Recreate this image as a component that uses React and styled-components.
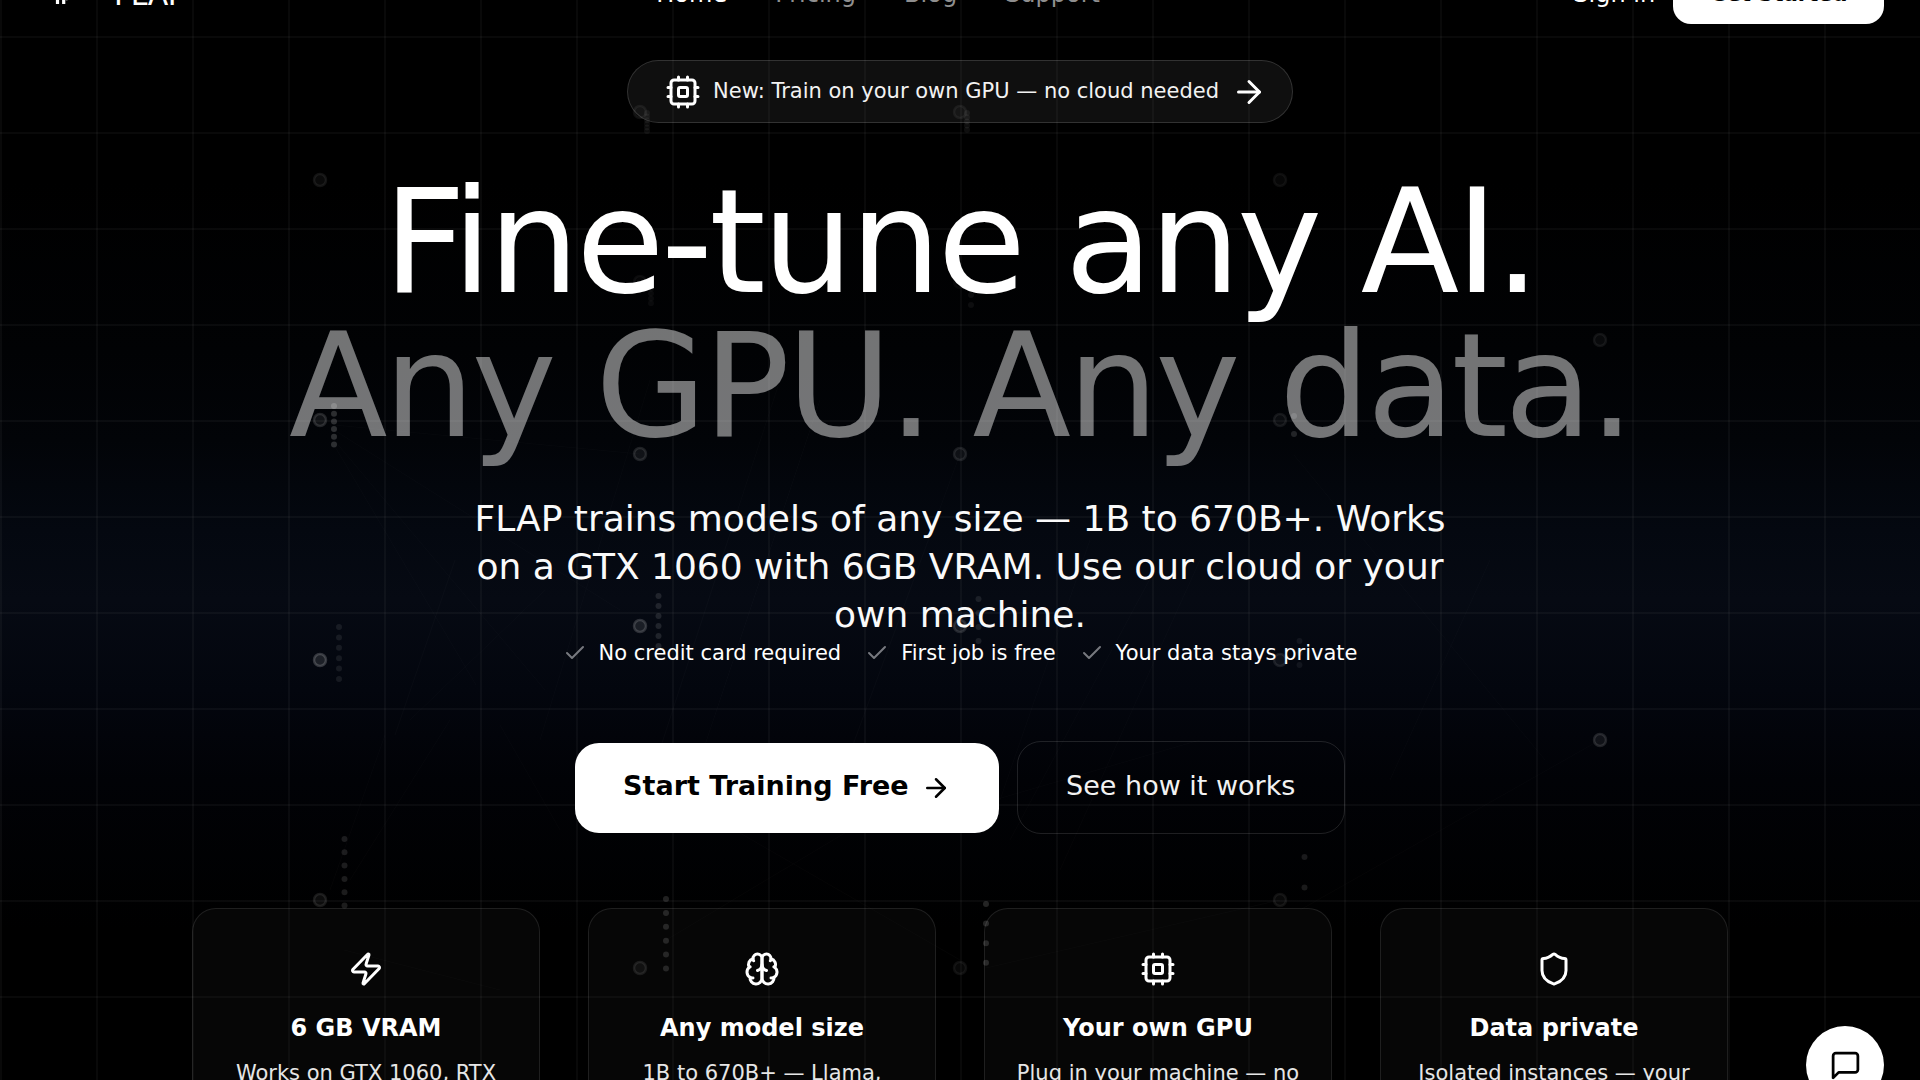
import React from 'react'
import styled, { createGlobalStyle } from 'styled-components'
import { ArrowRight, Check, Shield, Zap } from 'lucide-react'

const rings = [
  [320, 180, 0.1], [640, 112, 0.08], [960, 112, 0.08], [1280, 180, 0.07],
  [640, 282, 0.06], [960, 282, 0.04], [1600, 340, 0.09],
  [320, 420, 0.17], [1280, 420, 0.1], [640, 454, 0.15], [960, 454, 0.13],
  [640, 626, 0.22], [960, 626, 0.16], [320, 660, 0.25], [1280, 660, 0.12],
  [1600, 740, 0.16], [320, 900, 0.13], [1280, 900, 0.09], [640, 968, 0.12], [960, 968, 0.08],
]

// vertical dot runs: x, first y, gap, count, opacity
const trails = [
  [647, 113, 3.6, 6, 0.05], [967, 113, 4.2, 5, 0.06],
  [651, 284, 4.8, 5, 0.04], [971, 295, 10, 2, 0.05],
  [334, 406, 7.7, 6, 0.17], [1294, 416, 18, 2, 0.13],
  [658.5, 596, 10, 6, 0.11], [978.5, 599, 14, 4, 0.09],
  [339, 627, 10.4, 6, 0.08], [1299.5, 641, 12, 3, 0.06],
  [344.5, 839, 13.3, 6, 0.11], [1304.5, 857, 30.5, 2, 0.1],
  [666, 899, 13.9, 6, 0.13], [986, 904, 19.6, 4, 0.14],
]

const links = [
  [334, 445, 476, 685], [334, 440, 545, 690], [334, 430, 620, 610],
  [455, 560, 395, 735], [545, 590, 410, 720], [385, 735, 330, 890],
  [450, 720, 350, 880], [334, 425, 640, 454], [500, 725, 560, 830],
  [780, 380, 650, 780], [820, 400, 690, 790], [650, 380, 540, 740],
  [960, 454, 840, 780], [1090, 540, 1000, 800], [1160, 560, 1010, 840],
  [1200, 560, 1060, 870], [1294, 455, 1545, 760], [1490, 560, 1390, 780],
  [700, 810, 960, 960], [666, 940, 900, 800], [986, 968, 1280, 900],
  [344, 950, 500, 990], [1300, 910, 1600, 740], [960, 810, 1200, 740],
]

const Chip = () => (
  <LineIcon viewBox="0 0 24 24">
    <rect x="4" y="4" width="16" height="16" rx="2" />
    <rect x="9" y="9" width="6" height="6" rx="1" />
    <path d="M15 2v2M15 20v2M2 15h2M2 9h2M20 15h2M20 9h2M9 2v2M9 20v2" />
  </LineIcon>
)

const BrainIcon = () => (
  <LineIcon viewBox="0 0 24 24">
    <path d="M12 5a3 3 0 1 0-5.997.125 4 4 0 0 0-2.526 5.77 4 4 0 0 0 .556 6.588A4 4 0 1 0 12 18Z" />
    <path d="M12 5a3 3 0 1 1 5.997.125 4 4 0 0 1 2.526 5.77 4 4 0 0 1-.556 6.588A4 4 0 1 1 12 18Z" />
    <path d="M15 13a4.5 4.5 0 0 1-3-4 4.5 4.5 0 0 1-3 4" />
    <path d="M17.599 6.5a3 3 0 0 0 .399-1.375M6.003 5.125A3 3 0 0 0 6.401 6.5" />
    <path d="M3.477 10.896a4 4 0 0 1 .585-.396M19.938 10.5a4 4 0 0 1 .585.396" />
    <path d="M6 18a4 4 0 0 1-1.967-.516M19.967 17.484A4 4 0 0 1 18 18" />
  </LineIcon>
)

const ChatIcon = () => (
  <LineIcon viewBox="0 0 24 24" $size={33}>
    <path d="M21 15a2 2 0 0 1-2 2H7l-4 4V5a2 2 0 0 1 2-2h14a2 2 0 0 1 2 2z" />
  </LineIcon>
)

const features = [
  { icon: Zap, title: '6 GB VRAM', text: 'Works on GTX 1060, RTX 3060, and up' },
  { icon: BrainIcon, title: 'Any model size', text: '1B to 670B+ — Llama, Mistral, Qwen' },
  { icon: Chip, title: 'Your own GPU', text: 'Plug in your machine — no cloud needed' },
  { icon: Shield, title: 'Data private', text: 'Isolated instances — your data stays yours' },
]

const Network = () => (
  <NetworkSvg viewBox="0 0 1920 1080">
    {links.map(([x1, y1, x2, y2], i) => (
      <line key={i} x1={x1} y1={y1} x2={x2} y2={y2} stroke="#fff" strokeOpacity="0.02" />
    ))}
    {rings.map(([x, y, o], i) => (
      <circle key={i} cx={x} cy={y} r="6" fill="#fff" fillOpacity={o * 0.4} stroke="#fff" strokeOpacity={o * 0.75} strokeWidth="2.5" />
    ))}
    {trails.map(([x, y, gap, count, o]) =>
      Array.from({ length: count }, (_, i) => (
        <circle key={`${x}-${i}`} cx={x} cy={y + gap * i} r="3" fill="#fff" fillOpacity={o} />
      ))
    )}
  </NetworkSvg>
)

export default function App() {
  return (
    <Page>
      <GlobalStyle />
      <Grid />
      <Network />
      <Nav>
        <Brand>
          <LogoMark viewBox="0 0 60 48">
            <path d="M21.5 8v26M27.7 34V10h8l-6 20" />
          </LogoMark>
          FLAP
        </Brand>
        <NavLinks>
          <NavLink $active>Home</NavLink>
          <NavLink>Pricing</NavLink>
          <NavLink>Blog</NavLink>
          <NavLink>Support</NavLink>
        </NavLinks>
        <NavActions>
          <NavLink $active>Sign in</NavLink>
          <GetStarted>Get Started</GetStarted>
        </NavActions>
      </Nav>
      <Hero>
        <Badge>
          <Chip />
          <Label $lift={1}>New: Train on your own GPU — no cloud needed</Label>
          <ArrowRight size={36} />
        </Badge>
        <Title>
          Fine-tune any AI.
          <Muted>Any GPU. Any data.</Muted>
        </Title>
        <Lead>
          FLAP trains models of any size — 1B to 670B+. Works on a GTX 1060 with 6GB VRAM. Use our cloud or your own machine.
        </Lead>
        <Perks>
          {['No credit card required', 'First job is free', 'Your data stays private'].map((perk) => (
            <Perk key={perk}>
              <Check size={24} />
              {perk}
            </Perk>
          ))}
        </Perks>
        <Actions>
          <Primary>
            <Label $lift={5}>Start Training Free</Label>
            <ArrowRight size={30} />
          </Primary>
          <Secondary>
            <Label $lift={5}>See how it works</Label>
          </Secondary>
        </Actions>
        <Cards>
          {features.map(({ icon: Icon, title, text }) => (
            <Card key={title}>
              <Icon size={36} />
              <CardTitle>{title}</CardTitle>
              <CardText>{text}</CardText>
            </Card>
          ))}
        </Cards>
      </Hero>
      <ChatButton>
        <ChatIcon />
      </ChatButton>
    </Page>
  )
}

const GlobalStyle = createGlobalStyle`
  * {
    box-sizing: border-box;
  }
  body {
    margin: 0;
    background: #000;
    overflow: hidden;
  }
  button {
    font: inherit;
    border: 0;
  }
`

const Page = styled.div`
  position: relative;
  width: 1920px;
  height: 1080px;
  overflow: hidden;
  color: #fff;
  font-family: 'DejaVu Sans', sans-serif;
  background: linear-gradient(180deg, #000 0, #000 180px, #010204 350px, #020408 440px, #040810 530px, #060a13 600px, #03060e 690px, #010206 780px, #000 930px);
`

const Grid = styled.div`
  position: absolute;
  inset: 0;
  background-image:
    linear-gradient(rgba(255, 255, 255, 0.034) 2px, transparent 2px),
    linear-gradient(90deg, rgba(255, 255, 255, 0.034) 2px, transparent 2px);
  background-size: 96px 96px;
  background-position: 0 36px;
`

const NetworkSvg = styled.svg`
  position: absolute;
  inset: 0;
  width: 1920px;
  height: 1080px;
  pointer-events: none;
`

const LineIcon = styled.svg`
  flex: none;
  width: ${({ $size = 36 }) => $size}px;
  height: ${({ $size = 36 }) => $size}px;
  fill: none;
  stroke: currentColor;
  stroke-width: 2;
  stroke-linecap: round;
  stroke-linejoin: round;
`

const Nav = styled.nav`
  position: relative;
  display: flex;
  justify-content: space-between;
  align-items: center;
  height: 72px;
  margin-top: -44px;
  padding: 0 36px;
`

const Brand = styled.div`
  display: flex;
  align-items: center;
  gap: 18px;
  width: 147px;
  padding-top: 4px;
  font-size: 30px;
  letter-spacing: -0.5px;
`

const LogoMark = styled.svg`
  flex: none;
  width: 60px;
  height: 48px;
  fill: none;
  stroke: #fff;
  stroke-width: 3.2;
`

const NavLinks = styled.div`
  display: flex;
  gap: 48px;
`

const NavLink = styled.span`
  padding-top: 3px;
  font-size: 24px;
  line-height: 36px;
  color: ${({ $active }) => ($active ? '#fff' : '#8f8f8f')};
`

const NavActions = styled.div`
  display: flex;
  align-items: center;
  justify-content: flex-end;
  gap: 18px;
`

const GetStarted = styled.button`
  height: 64px;
  padding: 4px 36.5px 0;
  border-radius: 18px;
  background: #fff;
  color: #000;
  font-size: 21px;
  font-weight: 700;
`

const Hero = styled.main`
  position: relative;
  display: flex;
  flex-direction: column;
  align-items: center;
  padding-top: 32px;
`

const Label = styled.span`
  display: block;
  padding-bottom: ${({ $lift }) => $lift}px;
`

const Badge = styled.div`
  display: flex;
  align-items: center;
  gap: 12px;
  height: 63px;
  padding: 0 25px 0 37px;
  border: 1.5px solid rgba(255, 255, 255, 0.15);
  border-radius: 32px;
  background: rgba(255, 255, 255, 0.06);
  color: #f2f2f2;
  font-size: 21px;
  white-space: nowrap;

  svg {
    color: #fff;
  }
`

const Title = styled.h1`
  margin: 47px 0 0;
  font-size: 144px;
  font-weight: 400;
  line-height: 144px;
  letter-spacing: -0.025em;
  text-align: center;
  white-space: nowrap;
`

const Muted = styled.span`
  display: block;
  color: rgba(255, 255, 255, 0.45);
`

const Lead = styled.p`
  width: 1008px;
  margin: 37px 0 0;
  color: #fafafa;
  font-size: 36px;
  line-height: 48px;
  text-align: center;
`

const Perks = styled.div`
  display: flex;
  gap: 24px;
  height: 30px;
  margin-top: -1px;
`

const Perk = styled.div`
  display: flex;
  align-items: center;
  gap: 12px;
  font-size: 21px;

  svg {
    color: #77797f;
  }
`

const Actions = styled.div`
  display: flex;
  align-items: center;
  gap: 18px;
  margin-top: 73px;
`

const Primary = styled.button`
  display: flex;
  align-items: center;
  gap: 12px;
  height: 90px;
  padding: 0 48px;
  border-radius: 24px;
  background: #fff;
  color: #000;
  font-size: 27px;
  font-weight: 700;
`

const Secondary = styled.button`
  height: 93px;
  padding: 0 48.5px;
  border: 1.5px solid rgba(255, 255, 255, 0.12);
  border-radius: 24px;
  background: transparent;
  color: #f2f2f2;
  font-size: 27px;
`

const Cards = styled.div`
  display: grid;
  grid-template-columns: repeat(4, 1fr);
  gap: 48px;
  width: 1536px;
  margin-top: 74px;
`

const Card = styled.div`
  display: flex;
  flex-direction: column;
  align-items: center;
  height: 260px;
  padding: 42px 30px 0;
  border: 1.5px solid rgba(255, 255, 255, 0.1);
  border-radius: 24px;
  background: rgba(255, 255, 255, 0.024);
`

const CardTitle = styled.h3`
  margin: 23px 0 0;
  font-size: 24px;
  line-height: 36px;
`

const CardText = styled.p`
  margin: 11px 0 0;
  color: #e6e6e6;
  font-size: 21px;
  line-height: 32px;
  text-align: center;
`

const ChatButton = styled.button`
  position: absolute;
  right: 36px;
  top: 1026px;
  display: flex;
  align-items: center;
  justify-content: center;
  width: 78px;
  height: 78px;
  padding: 0;
  border-radius: 50%;
  background: #fff;
  color: #000;
`
